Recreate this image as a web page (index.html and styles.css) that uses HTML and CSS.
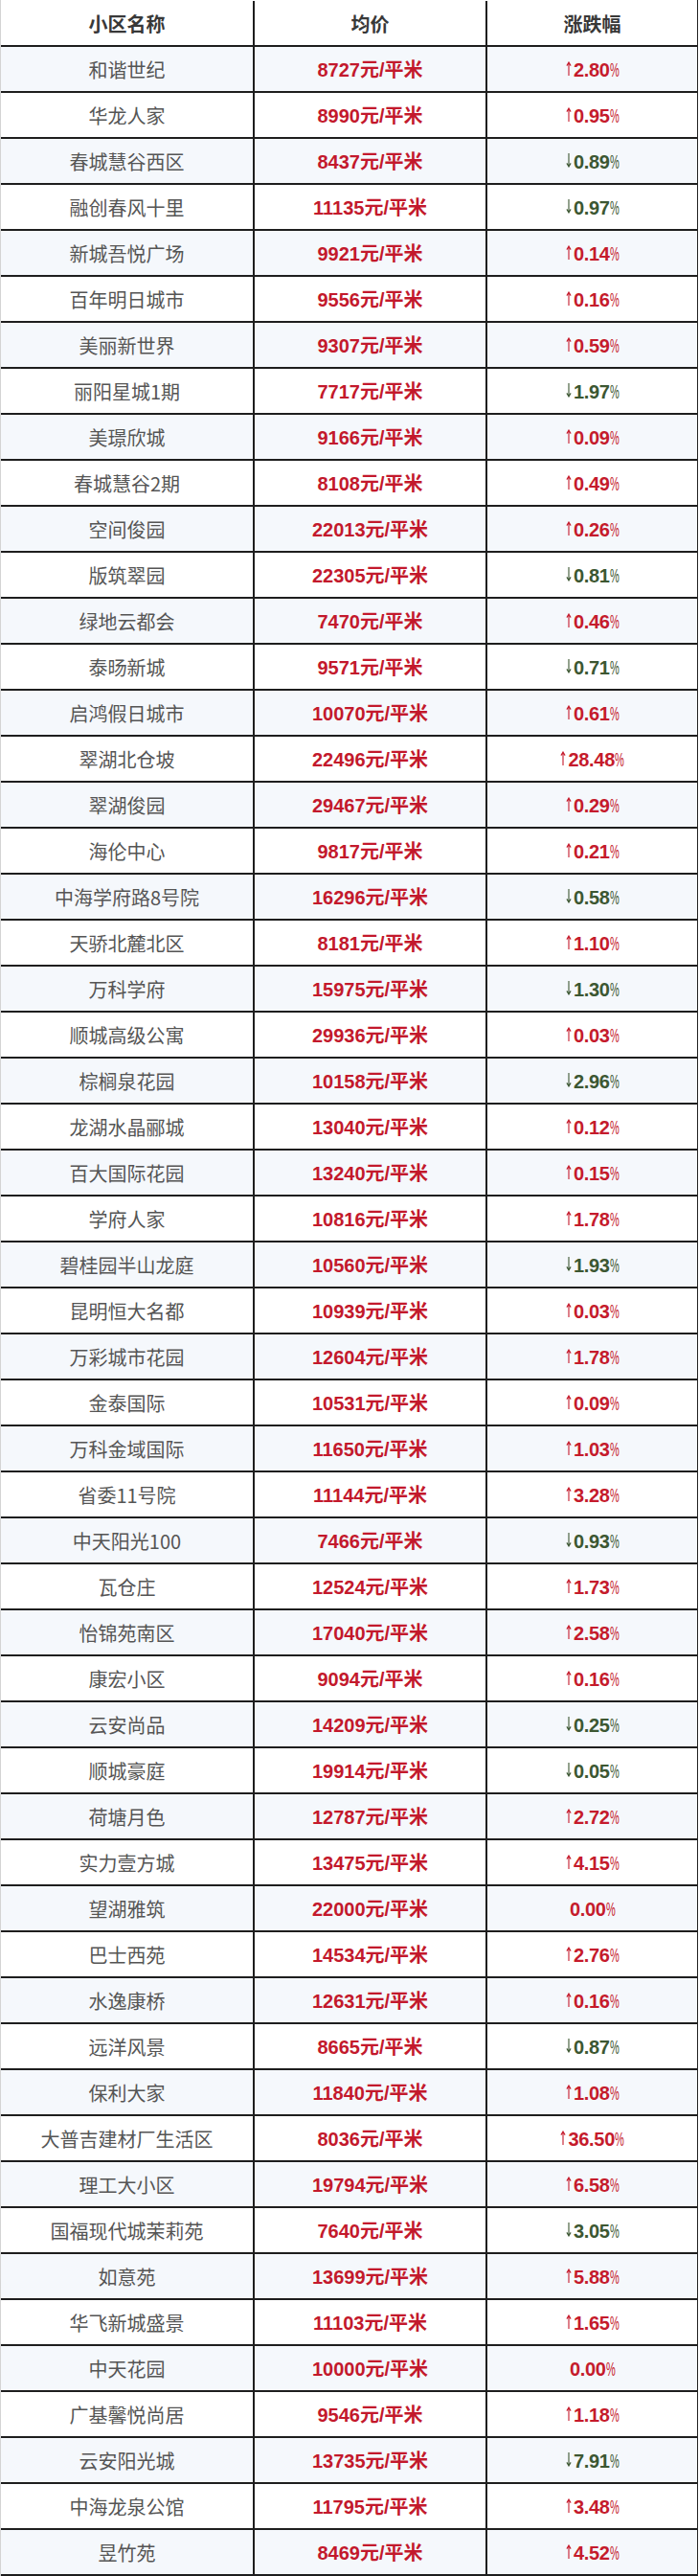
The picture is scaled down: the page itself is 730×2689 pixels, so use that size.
FILE: index.html
```html
<!DOCTYPE html>
<html lang="zh-CN">
<head>
<meta charset="utf-8">
<title>小区均价</title>
<link rel="stylesheet" href="styles.css">
</head>
<body>
<svg class="defs" width="0" height="0" aria-hidden="true">
  <symbol id="au" viewBox="0 0 6 15"><path d="M3 15V1.2M0.9 4.6L3 1L5.1 4.6" fill="none" stroke="currentColor" stroke-width="1.1"/></symbol>
  <symbol id="ad" viewBox="0 0 6 15"><path d="M3 0V13.8M0.9 10.4L3 14L5.1 10.4" fill="none" stroke="currentColor" stroke-width="1.1"/></symbol>
</svg>
<div class="tbl">
  <div class="row head"><div class="cell">小区名称</div><div class="cell">均价</div><div class="cell">涨跌幅</div></div>
  <div class="row"><div class="cell name">和谐世纪</div><div class="cell price">8727元/平米</div><div class="cell chg up"><svg class="ar"><use href="#au"/></svg>2.80<span class="pc">%</span></div></div>
  <div class="row"><div class="cell name">华龙人家</div><div class="cell price">8990元/平米</div><div class="cell chg up"><svg class="ar"><use href="#au"/></svg>0.95<span class="pc">%</span></div></div>
  <div class="row"><div class="cell name">春城慧谷西区</div><div class="cell price">8437元/平米</div><div class="cell chg down"><svg class="ar"><use href="#ad"/></svg>0.89<span class="pc">%</span></div></div>
  <div class="row"><div class="cell name">融创春风十里</div><div class="cell price">11135元/平米</div><div class="cell chg down"><svg class="ar"><use href="#ad"/></svg>0.97<span class="pc">%</span></div></div>
  <div class="row"><div class="cell name">新城吾悦广场</div><div class="cell price">9921元/平米</div><div class="cell chg up"><svg class="ar"><use href="#au"/></svg>0.14<span class="pc">%</span></div></div>
  <div class="row"><div class="cell name">百年明日城市</div><div class="cell price">9556元/平米</div><div class="cell chg up"><svg class="ar"><use href="#au"/></svg>0.16<span class="pc">%</span></div></div>
  <div class="row"><div class="cell name">美丽新世界</div><div class="cell price">9307元/平米</div><div class="cell chg up"><svg class="ar"><use href="#au"/></svg>0.59<span class="pc">%</span></div></div>
  <div class="row"><div class="cell name">丽阳星城1期</div><div class="cell price">7717元/平米</div><div class="cell chg down"><svg class="ar"><use href="#ad"/></svg>1.97<span class="pc">%</span></div></div>
  <div class="row"><div class="cell name">美璟欣城</div><div class="cell price">9166元/平米</div><div class="cell chg up"><svg class="ar"><use href="#au"/></svg>0.09<span class="pc">%</span></div></div>
  <div class="row"><div class="cell name">春城慧谷2期</div><div class="cell price">8108元/平米</div><div class="cell chg up"><svg class="ar"><use href="#au"/></svg>0.49<span class="pc">%</span></div></div>
  <div class="row"><div class="cell name">空间俊园</div><div class="cell price">22013元/平米</div><div class="cell chg up"><svg class="ar"><use href="#au"/></svg>0.26<span class="pc">%</span></div></div>
  <div class="row"><div class="cell name">版筑翠园</div><div class="cell price">22305元/平米</div><div class="cell chg down"><svg class="ar"><use href="#ad"/></svg>0.81<span class="pc">%</span></div></div>
  <div class="row"><div class="cell name">绿地云都会</div><div class="cell price">7470元/平米</div><div class="cell chg up"><svg class="ar"><use href="#au"/></svg>0.46<span class="pc">%</span></div></div>
  <div class="row"><div class="cell name">泰旸新城</div><div class="cell price">9571元/平米</div><div class="cell chg down"><svg class="ar"><use href="#ad"/></svg>0.71<span class="pc">%</span></div></div>
  <div class="row"><div class="cell name">启鸿假日城市</div><div class="cell price">10070元/平米</div><div class="cell chg up"><svg class="ar"><use href="#au"/></svg>0.61<span class="pc">%</span></div></div>
  <div class="row"><div class="cell name">翠湖北仓坡</div><div class="cell price">22496元/平米</div><div class="cell chg up"><svg class="ar"><use href="#au"/></svg>28.48<span class="pc">%</span></div></div>
  <div class="row"><div class="cell name">翠湖俊园</div><div class="cell price">29467元/平米</div><div class="cell chg up"><svg class="ar"><use href="#au"/></svg>0.29<span class="pc">%</span></div></div>
  <div class="row"><div class="cell name">海伦中心</div><div class="cell price">9817元/平米</div><div class="cell chg up"><svg class="ar"><use href="#au"/></svg>0.21<span class="pc">%</span></div></div>
  <div class="row"><div class="cell name">中海学府路8号院</div><div class="cell price">16296元/平米</div><div class="cell chg down"><svg class="ar"><use href="#ad"/></svg>0.58<span class="pc">%</span></div></div>
  <div class="row"><div class="cell name">天骄北麓北区</div><div class="cell price">8181元/平米</div><div class="cell chg up"><svg class="ar"><use href="#au"/></svg>1.10<span class="pc">%</span></div></div>
  <div class="row"><div class="cell name">万科学府</div><div class="cell price">15975元/平米</div><div class="cell chg down"><svg class="ar"><use href="#ad"/></svg>1.30<span class="pc">%</span></div></div>
  <div class="row"><div class="cell name">顺城高级公寓</div><div class="cell price">29936元/平米</div><div class="cell chg up"><svg class="ar"><use href="#au"/></svg>0.03<span class="pc">%</span></div></div>
  <div class="row"><div class="cell name">棕榈泉花园</div><div class="cell price">10158元/平米</div><div class="cell chg down"><svg class="ar"><use href="#ad"/></svg>2.96<span class="pc">%</span></div></div>
  <div class="row"><div class="cell name">龙湖水晶郦城</div><div class="cell price">13040元/平米</div><div class="cell chg up"><svg class="ar"><use href="#au"/></svg>0.12<span class="pc">%</span></div></div>
  <div class="row"><div class="cell name">百大国际花园</div><div class="cell price">13240元/平米</div><div class="cell chg up"><svg class="ar"><use href="#au"/></svg>0.15<span class="pc">%</span></div></div>
  <div class="row"><div class="cell name">学府人家</div><div class="cell price">10816元/平米</div><div class="cell chg up"><svg class="ar"><use href="#au"/></svg>1.78<span class="pc">%</span></div></div>
  <div class="row"><div class="cell name">碧桂园半山龙庭</div><div class="cell price">10560元/平米</div><div class="cell chg down"><svg class="ar"><use href="#ad"/></svg>1.93<span class="pc">%</span></div></div>
  <div class="row"><div class="cell name">昆明恒大名都</div><div class="cell price">10939元/平米</div><div class="cell chg up"><svg class="ar"><use href="#au"/></svg>0.03<span class="pc">%</span></div></div>
  <div class="row"><div class="cell name">万彩城市花园</div><div class="cell price">12604元/平米</div><div class="cell chg up"><svg class="ar"><use href="#au"/></svg>1.78<span class="pc">%</span></div></div>
  <div class="row"><div class="cell name">金泰国际</div><div class="cell price">10531元/平米</div><div class="cell chg up"><svg class="ar"><use href="#au"/></svg>0.09<span class="pc">%</span></div></div>
  <div class="row"><div class="cell name">万科金域国际</div><div class="cell price">11650元/平米</div><div class="cell chg up"><svg class="ar"><use href="#au"/></svg>1.03<span class="pc">%</span></div></div>
  <div class="row"><div class="cell name">省委11号院</div><div class="cell price">11144元/平米</div><div class="cell chg up"><svg class="ar"><use href="#au"/></svg>3.28<span class="pc">%</span></div></div>
  <div class="row"><div class="cell name">中天阳光100</div><div class="cell price">7466元/平米</div><div class="cell chg down"><svg class="ar"><use href="#ad"/></svg>0.93<span class="pc">%</span></div></div>
  <div class="row"><div class="cell name">瓦仓庄</div><div class="cell price">12524元/平米</div><div class="cell chg up"><svg class="ar"><use href="#au"/></svg>1.73<span class="pc">%</span></div></div>
  <div class="row"><div class="cell name">怡锦苑南区</div><div class="cell price">17040元/平米</div><div class="cell chg up"><svg class="ar"><use href="#au"/></svg>2.58<span class="pc">%</span></div></div>
  <div class="row"><div class="cell name">康宏小区</div><div class="cell price">9094元/平米</div><div class="cell chg up"><svg class="ar"><use href="#au"/></svg>0.16<span class="pc">%</span></div></div>
  <div class="row"><div class="cell name">云安尚品</div><div class="cell price">14209元/平米</div><div class="cell chg down"><svg class="ar"><use href="#ad"/></svg>0.25<span class="pc">%</span></div></div>
  <div class="row"><div class="cell name">顺城豪庭</div><div class="cell price">19914元/平米</div><div class="cell chg down"><svg class="ar"><use href="#ad"/></svg>0.05<span class="pc">%</span></div></div>
  <div class="row"><div class="cell name">荷塘月色</div><div class="cell price">12787元/平米</div><div class="cell chg up"><svg class="ar"><use href="#au"/></svg>2.72<span class="pc">%</span></div></div>
  <div class="row"><div class="cell name">实力壹方城</div><div class="cell price">13475元/平米</div><div class="cell chg up"><svg class="ar"><use href="#au"/></svg>4.15<span class="pc">%</span></div></div>
  <div class="row"><div class="cell name">望湖雅筑</div><div class="cell price">22000元/平米</div><div class="cell chg up">0.00<span class="pc">%</span></div></div>
  <div class="row"><div class="cell name">巴士西苑</div><div class="cell price">14534元/平米</div><div class="cell chg up"><svg class="ar"><use href="#au"/></svg>2.76<span class="pc">%</span></div></div>
  <div class="row"><div class="cell name">水逸康桥</div><div class="cell price">12631元/平米</div><div class="cell chg up"><svg class="ar"><use href="#au"/></svg>0.16<span class="pc">%</span></div></div>
  <div class="row"><div class="cell name">远洋风景</div><div class="cell price">8665元/平米</div><div class="cell chg down"><svg class="ar"><use href="#ad"/></svg>0.87<span class="pc">%</span></div></div>
  <div class="row"><div class="cell name">保利大家</div><div class="cell price">11840元/平米</div><div class="cell chg up"><svg class="ar"><use href="#au"/></svg>1.08<span class="pc">%</span></div></div>
  <div class="row"><div class="cell name">大普吉建材厂生活区</div><div class="cell price">8036元/平米</div><div class="cell chg up"><svg class="ar"><use href="#au"/></svg>36.50<span class="pc">%</span></div></div>
  <div class="row"><div class="cell name">理工大小区</div><div class="cell price">19794元/平米</div><div class="cell chg up"><svg class="ar"><use href="#au"/></svg>6.58<span class="pc">%</span></div></div>
  <div class="row"><div class="cell name">国福现代城茉莉苑</div><div class="cell price">7640元/平米</div><div class="cell chg down"><svg class="ar"><use href="#ad"/></svg>3.05<span class="pc">%</span></div></div>
  <div class="row"><div class="cell name">如意苑</div><div class="cell price">13699元/平米</div><div class="cell chg up"><svg class="ar"><use href="#au"/></svg>5.88<span class="pc">%</span></div></div>
  <div class="row"><div class="cell name">华飞新城盛景</div><div class="cell price">11103元/平米</div><div class="cell chg up"><svg class="ar"><use href="#au"/></svg>1.65<span class="pc">%</span></div></div>
  <div class="row"><div class="cell name">中天花园</div><div class="cell price">10000元/平米</div><div class="cell chg up">0.00<span class="pc">%</span></div></div>
  <div class="row"><div class="cell name">广基馨悦尚居</div><div class="cell price">9546元/平米</div><div class="cell chg up"><svg class="ar"><use href="#au"/></svg>1.18<span class="pc">%</span></div></div>
  <div class="row"><div class="cell name">云安阳光城</div><div class="cell price">13735元/平米</div><div class="cell chg down"><svg class="ar"><use href="#ad"/></svg>7.91<span class="pc">%</span></div></div>
  <div class="row"><div class="cell name">中海龙泉公馆</div><div class="cell price">11795元/平米</div><div class="cell chg up"><svg class="ar"><use href="#au"/></svg>3.48<span class="pc">%</span></div></div>
  <div class="row"><div class="cell name">昱竹苑</div><div class="cell price">8469元/平米</div><div class="cell chg up"><svg class="ar"><use href="#au"/></svg>4.52<span class="pc">%</span></div></div>
</div>
</body>
</html>
```
FILE: styles.css
```css
html, body {
  margin: 0;
  padding: 0;
  background: #ffffff;
}
.defs {
  position: absolute;
  width: 0;
  height: 0;
  overflow: hidden;
}
.tbl {
  width: 729px;
  box-sizing: border-box;
  padding-top: 1px;
  border-left: 1px solid #d4d4d4;
  border-right: 1px solid #222222;
  font-family: "Liberation Sans", "Noto Sans CJK SC", sans-serif;
}
.row {
  display: grid;
  grid-template-columns: 263px 243px 1fr;
  height: 48px;
  box-sizing: border-box;
  border-bottom: 2px solid #1e1e1e;
}
.row:nth-child(even) {
  background: #f5f8fc;
}
.cell {
  display: flex;
  align-items: center;
  justify-content: center;
  font-size: 20px;
  line-height: 1;
  padding-top: 1px;
  white-space: nowrap;
}
.cell + .cell {
  border-left: 2px solid #1e1e1e;
}
.head .cell {
  color: #383838;
  font-weight: bold;
  font-family: "Noto Sans CJK SC", sans-serif;
  font-size: 20px;
}
.name {
  color: #555555;
  font-family: "Noto Sans CJK SC", sans-serif;
  font-weight: normal;
}
.price {
  color: #c3192c;
  font-weight: bold;
}
.chg {
  font-weight: bold;
  font-size: 20px;
  letter-spacing: -0.3px;
}
.up {
  color: #c51b2c;
}
.down {
  color: #3c5732;
}
.ar {
  width: 6px;
  height: 15px;
  margin-right: 2px;
  margin-top: -3px;
  flex: none;
}
.pc {
  display: inline-block;
  transform: scaleX(0.55);
  transform-origin: left center;
  margin-right: -8px;
  font-weight: normal;
}
```
